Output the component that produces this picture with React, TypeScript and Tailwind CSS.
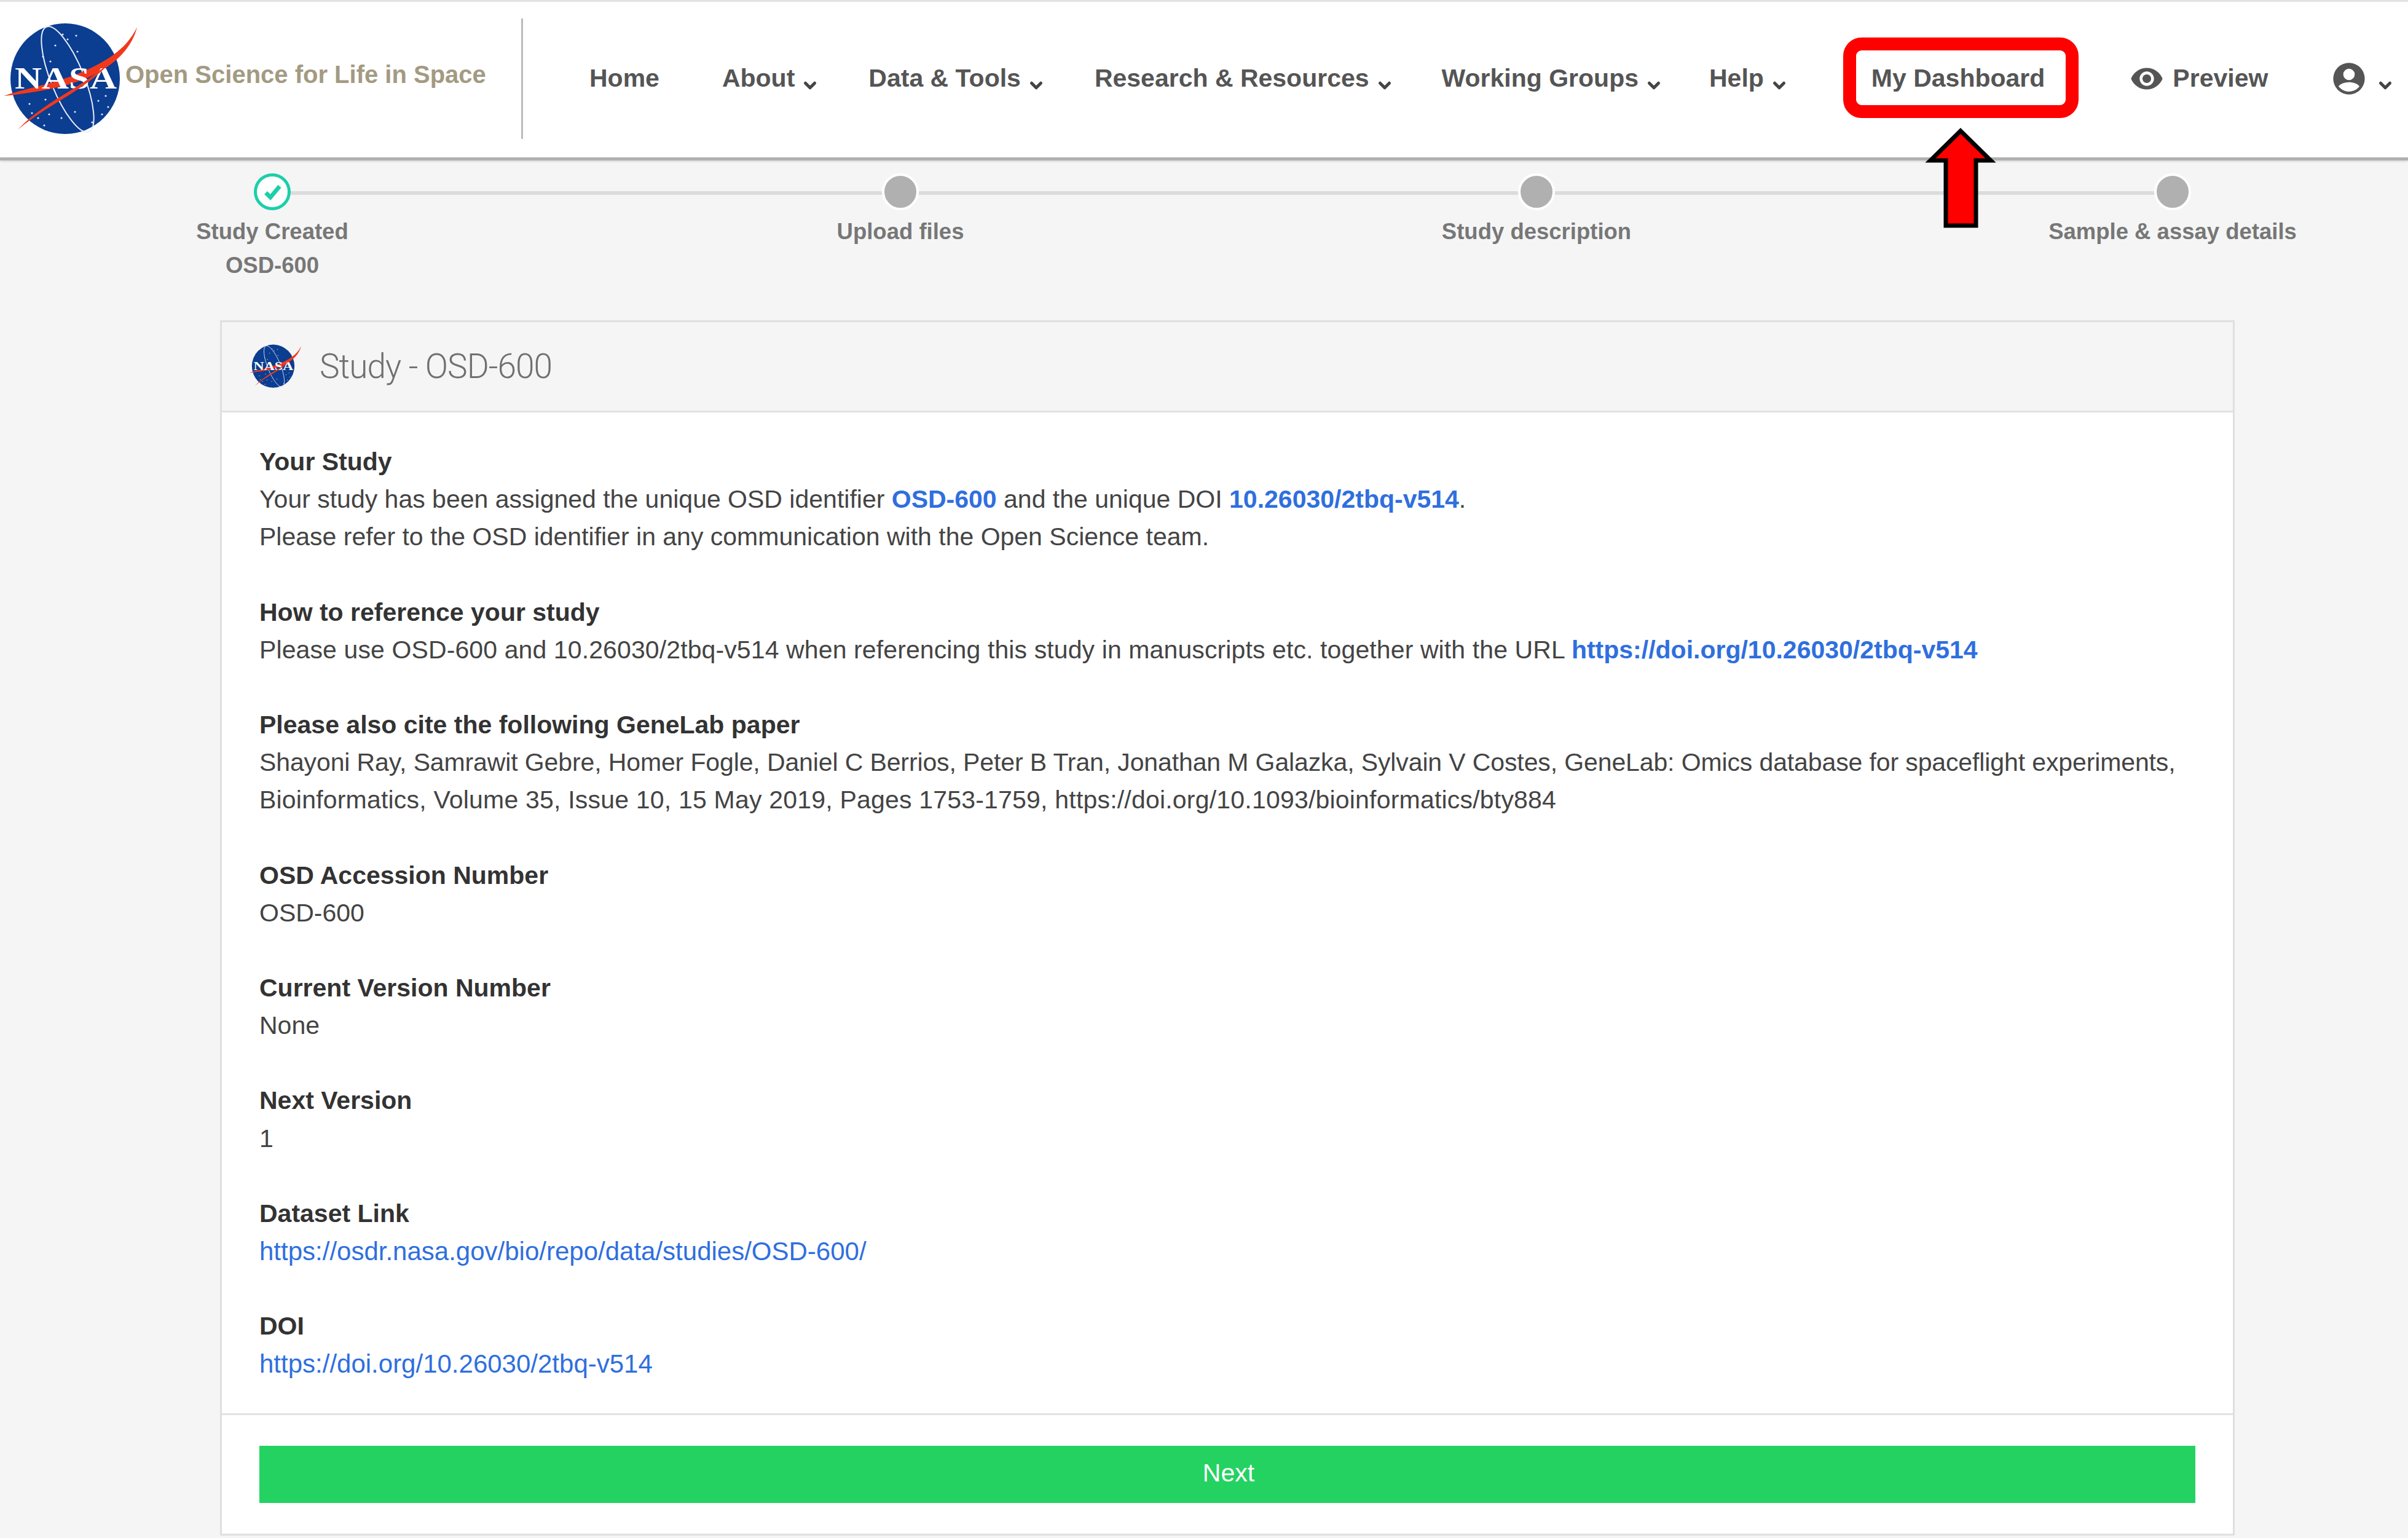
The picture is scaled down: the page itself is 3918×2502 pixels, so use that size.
import { ChevronDown } from "lucide-react";

const navItems = [
  { label: "Home", left: "ml-[108px]", caret: false },
  { label: "About", left: "ml-[102px]", caret: true },
  { label: "Data & Tools", left: "ml-[80px]", caret: true },
  { label: "Research & Resources", left: "ml-[80px]", caret: true },
  { label: "Working Groups", left: "ml-[78px]", caret: true },
  { label: "Help", left: "ml-[75px]", caret: true },
];

const stars = [
  [102, 22], [110, 30], [124, 24], [126, 50], [90, 40], [70, 58], [82, 66], [160, 130], [172, 122],
  [176, 140], [166, 152], [52, 150], [62, 158], [72, 170], [80, 152], [100, 158], [122, 148], [150, 165], [74, 128], [48, 135],
];

function NasaLogo({ className }: { className: string }) {
  return (
    <svg viewBox="0 0 230 190" className={className}>
      <ellipse cx="106" cy="94" rx="89" ry="90" fill="#0b3d91" />
      {stars.map(([x, y], i) => (
        <circle key={i} cx={x} cy={y} r="1.6" fill="#dfe6f5" />
      ))}
      <ellipse cx="110" cy="95" rx="27" ry="92" transform="rotate(-22 110 95)" fill="none" stroke="#e8edf8" strokeWidth="2" />
      <path d="M223 10C205 48 170 68 122 88C82 103 35 112 6 122C50 118 112 108 152 88C192 68 216 40 223 10Z" fill="#f0391c" />
      <text x="24" y="110" fontFamily="'Liberation Serif', serif" fontWeight="700" fontSize="50" fill="#fff" textLength="166" lengthAdjust="spacingAndGlyphs">
        NASA
      </text>
      <path d="M192 52C150 104 78 124 29 177C82 132 152 108 192 52Z" fill="#f0391c" />
    </svg>
  );
}

function Caret({ className = "ml-[10px]" }: { className?: string }) {
  return <ChevronDown className={`${className} mt-[22px] size-[30px] text-[#444]`} strokeWidth={4} />;
}

function Step({ label, sub, done, left }: { label: string; sub?: string; done?: boolean; left: string }) {
  return (
    <div className={`${left} relative flex w-[400px] flex-col items-center text-center text-[36.500px] leading-[55px] font-bold whitespace-nowrap text-[#777]`}>
      {done ? (
        <div className="flex size-[60px] items-center justify-center rounded-full border-[5px] border-[#1ccfa8] bg-white">
          <svg viewBox="0 0 24 24" className="size-[36px] text-[#1ccfa8]" fill="none" stroke="currentColor" strokeWidth="4.500">
            <path d="M5 13l5 5L20 6" />
          </svg>
        </div>
      ) : (
        <div className="size-[60px] rounded-full border-[4px] border-white bg-[#b0b0b0]" />
      )}
      <div className="mt-[7px]">{label}</div>
      {sub && <div>{sub}</div>}
    </div>
  );
}

function Block({ title, children }: { title: string; children: React.ReactNode }) {
  return (
    <div className="mb-[61px] last:mb-0">
      <div className="font-bold text-[#333]">{title}</div>
      {children}
    </div>
  );
}

export default function App() {
  return (
    <div className="relative h-[2502px] w-[3918px] overflow-hidden bg-[#f5f5f5] font-['Liberation_Sans',sans-serif]">
      <header className="flex h-[261px] items-center border-t-[3px] border-b-[5px] border-t-[#e2e2e2] border-b-[#b0b0b0] bg-white shadow-[0_2px_3px_rgba(0,0,0,0.12)]">
        <NasaLogo className="-mt-[2px] h-[190px] w-[230px] shrink-0" />
        <div className="-mt-[18px] -ml-[26px] w-[644px] shrink-0 text-[40px] font-bold whitespace-nowrap text-[#a39a82]">Open Science for Life in Space</div>
        <div className="-mt-[3px] h-[196px] w-[3px] shrink-0 bg-[#bbb]" />
        <nav className="-mt-[3px] flex items-center text-[41px] font-bold whitespace-nowrap text-[#555]">
          {navItems.map((item) => (
            <div key={item.label} className={`${item.left} flex items-center`}>
              {item.label}
              {item.caret && <Caret />}
            </div>
          ))}
          <div className="ml-[135px]">My Dashboard</div>
          <div className="ml-[138px] flex items-center">
            <svg viewBox="0 0 24 24" className="mr-[14px] size-[56px]" fill="#555">
              <path d="M12 4.500C7 4.500 2.730 7.610 1 12c1.730 4.390 6 7.500 11 7.500s9.270-3.110 11-7.500c-1.730-4.390-6-7.500-11-7.500zM12 17c-2.760 0-5-2.240-5-5s2.240-5 5-5 5 2.240 5 5-2.240 5-5 5zm0-8c-1.660 0-3 1.340-3 3s1.340 3 3 3 3-1.340 3-3-1.340-3-3-3z" />
            </svg>
            Preview
          </div>
          <svg viewBox="0 0 24 24" className="ml-[104px] size-[56px]" fill="#555">
            <path d="M12 1a11 11 0 1 0 0 22 11 11 0 0 0 0-22zm0 4a4 4 0 1 1 0 8 4 4 0 0 1 0-8zm0 16c-3 0-5.600-1.400-7.300-3.600C6 15.500 9 14.500 12 14.500s6 1 7.300 2.900C17.600 19.600 15 21 12 21z" />
          </svg>
          <Caret className="ml-[16px]" />
        </nav>
      </header>

      <div className="relative flex pt-[21px]">
        <div className="absolute top-[50px] left-[443px] h-[6px] w-[3092px] bg-[#dcdcdc]" />
        <Step left="ml-[243px]" label="Study Created" sub="OSD-600" done />
        <Step left="ml-[622px]" label="Upload files" />
        <Step left="ml-[635px]" label="Study description" />
        <Step left="ml-[635px]" label="Sample & assay details" />
      </div>

      <section className="absolute top-[521px] left-[358px] w-[3278px] border-[3px] border-[#dfdfdf] bg-white">
        <div className="flex h-[147px] items-center border-b-[3px] border-[#e2e2e2] bg-[#f5f5f5] pl-[42px]">
          <NasaLogo className="h-[74px] w-[90px]" />
          <div className="ml-[27px] font-['Roboto',sans-serif] text-[55px] font-light tracking-[-1px] text-[#707070]">Study - OSD-600</div>
        </div>
        <div className="px-[61px] pt-[50px] pb-[49px] text-[41px] leading-[61.200px] text-[#444]">
          <Block title="Your Study">
            <div>
              Your study has been assigned the unique OSD identifier <a className="font-bold text-[#2f6fde]">OSD-600</a> and the unique DOI{" "}
              <a className="font-bold text-[#2f6fde]">10.26030/2tbq-v514</a>.
            </div>
            <div>Please refer to the OSD identifier in any communication with the Open Science team.</div>
          </Block>
          <Block title="How to reference your study">
            <span className="tracking-[0.11px]">Please use OSD-600 and 10.26030/2tbq-v514 when referencing this study in manuscripts etc. together with the URL </span>
            <a className="font-bold text-[#2f6fde]">https://doi.org/10.26030/2tbq-v514</a>
          </Block>
          <Block title="Please also cite the following GeneLab paper">
            <div className="tracking-[-0.12px]">Shayoni Ray, Samrawit Gebre, Homer Fogle, Daniel C Berrios, Peter B Tran, Jonathan M Galazka, Sylvain V Costes, GeneLab: Omics database for spaceflight experiments,</div>
            <div className="tracking-[0.2px]">Bioinformatics, Volume 35, Issue 10, 15 May 2019, Pages 1753-1759, https://doi.org/10.1093/bioinformatics/bty884</div>
          </Block>
          <Block title="OSD Accession Number">OSD-600</Block>
          <Block title="Current Version Number">None</Block>
          <Block title="Next Version">1</Block>
          <Block title="Dataset Link">
            <a className="block text-[42px] text-[#2f6fde]">https://osdr.nasa.gov/bio/repo/data/studies/OSD-600/</a>
          </Block>
          <Block title="DOI">
            <a className="block text-[42px] text-[#2f6fde]">https://doi.org/10.26030/2tbq-v514</a>
          </Block>
        </div>
        <div className="border-t-[3px] border-[#e2e2e2] px-[61px] pt-[50px] pb-[50px]">
          <button className="block h-[93px] w-full bg-[#24d262] pb-[3px] pl-[4px] text-[41px] text-white">Next</button>
        </div>
      </section>

      <div className="absolute top-[61px] left-[2999px] h-[131px] w-[383px] rounded-[30px] border-[21px] border-[#ff0000]" />
      <svg className="absolute top-[200px] left-[3125px] h-[180px] w-[130px]" viewBox="0 0 130 180">
        <path d="M65 13L114 61H90V167H41V61H16Z" fill="#ff0000" stroke="#000" strokeWidth="7" />
      </svg>
    </div>
  );
}
